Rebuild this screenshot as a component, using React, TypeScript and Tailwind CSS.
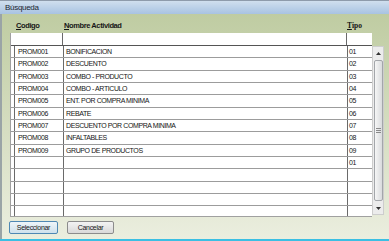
import React from 'react';

const rows: [string, string, string][] = [
  ['PROM001', 'BONIFICACION', '01'],
  ['PROM002', 'DESCUENTO', '02'],
  ['PROM003', 'COMBO - PRODUCTO', '03'],
  ['PROM004', 'COMBO - ARTICULO', '04'],
  ['PROM005', 'ENT. POR COMPRA MINIMA', '05'],
  ['PROM006', 'REBATE', '06'],
  ['PROM007', 'DESCUENTO POR COMPRA MINIMA', '07'],
  ['PROM008', 'INFALTABLES', '08'],
  ['PROM009', 'GRUPO DE PRODUCTOS', '09'],
  ['', '', '01'],
  ['', '', ''],
  ['', '', ''],
  ['', '', ''],
  ['', '', ''],
];

function GridRow({ code, name, tipo }: { code: string; name: string; tipo: string }) {
  return (
    <div className="flex h-[12.33px] shrink-0 border-b border-[#9c9c9c] leading-[11px]">
      <div className="w-[4px] shrink-0 border-r border-[#6a6a6a]" />
      <div className="w-[49px] shrink-0 border-r border-[#6a6a6a] pl-[3px] truncate">{code}</div>
      <div className="w-[284px] shrink-0 border-r border-[#6a6a6a] pl-[2px] truncate">{name}</div>
      <div className="w-[25px] shrink-0 pl-[1px]">{tipo}</div>
    </div>
  );
}

function ScrollBar() {
  return (
    <div className="mt-[13px] h-[169px] w-[12px] flex flex-col border border-[#cdcdcd] bg-[#ececec]">
      <div className="h-[12px] flex items-center justify-center">
        <svg width="5" height="3" viewBox="0 0 5 3"><path d="M0 3 L2.5 0 L5 3 Z" fill="#333" /></svg>
      </div>
      <div className="flex-1 mx-[0.5px] my-[1px] rounded-[2px] border border-[#a3a6aa] bg-gradient-to-r from-[#f6f6f6] to-[#d9dbdd] flex items-center justify-center">
        <div className="flex flex-col gap-[1px]">
          <div className="w-[5px] h-px bg-[#8a8a8a]" />
          <div className="w-[5px] h-px bg-[#8a8a8a]" />
          <div className="w-[5px] h-px bg-[#8a8a8a]" />
        </div>
      </div>
      <div className="h-[12px] flex items-center justify-center">
        <svg width="5" height="3" viewBox="0 0 5 3"><path d="M0 0 L2.5 3 L5 0 Z" fill="#333" /></svg>
      </div>
    </div>
  );
}

export default function App() {
  return (
    <div className="w-[389px] h-[241px] flex flex-col overflow-hidden font-['Liberation_Sans',Arial,sans-serif] text-[#161616]">
      <div className="h-[14px] shrink-0 border-t border-[#8e9bab] bg-gradient-to-b from-[#d0dfee] to-[#a8c3e2] pl-[5px] text-[8px] leading-[13px] tracking-[-0.3px] text-[#1c2733]">
        Búsqueda
      </div>
      <div className="flex-1 flex flex-col border-l-2 border-[#9aa4a6] bg-gradient-to-b from-[#bfcca2] to-[#ebeedf] pl-[8px]">
        {/* column headers */}
        <div className="h-[19px] flex items-end pb-[3px] text-[7.5px] leading-[9px] font-bold tracking-[-0.4px]">
          <div className="w-[4px] shrink-0" />
          <div className="w-[49px] shrink-0 pl-[2px]"><u>C</u>odigo</div>
          <div className="w-[284px] shrink-0 pl-[1px]"><u>N</u>ombre Actividad</div>
          <div className="w-[25px] shrink-0 font-['Liberation_Serif',serif] tracking-[0px]"><u>T</u>ipo</div>
        </div>

        <div className="flex">
          <div className="w-[362px] h-[184px] bg-white border-l border-b border-[#a0a0a0] flex flex-col overflow-hidden text-[7px] tracking-[-0.4px]">
            {/* filter row */}
            <div className="flex h-[13px] shrink-0 border-b border-[#555]">
              <div className="w-[3px] shrink-0" />
              <div className="w-[49px] shrink-0 border-r border-[#6a6a6a]" />
              <div className="w-[284px] shrink-0 border-r border-[#6a6a6a]" />
              <div className="w-[25px] shrink-0" />
            </div>
            {rows.map((r, i) => (
              <GridRow key={i} code={r[0]} name={r[1]} tipo={r[2]} />
            ))}
          </div>
          <ScrollBar />
        </div>

        <div className="mt-[4px] -ml-[1px] flex gap-[9px] text-[7px] tracking-[-0.3px]">
          <button className="w-[49px] h-[13px] rounded-[2px] border border-[#4f88b3] bg-gradient-to-b from-[#eef5f9] to-[#cfe1ec] leading-[11px]">
            Seleccionar
          </button>
          <button className="w-[47px] h-[13px] rounded-[2px] border border-[#8c8c8c] bg-gradient-to-b from-[#f3f3f3] to-[#d9d9d9] leading-[11px]">
            Cancelar
          </button>
        </div>
      </div>
      <div className="h-[2px] shrink-0 bg-[#3bbfe3]" />
    </div>
  );
}
